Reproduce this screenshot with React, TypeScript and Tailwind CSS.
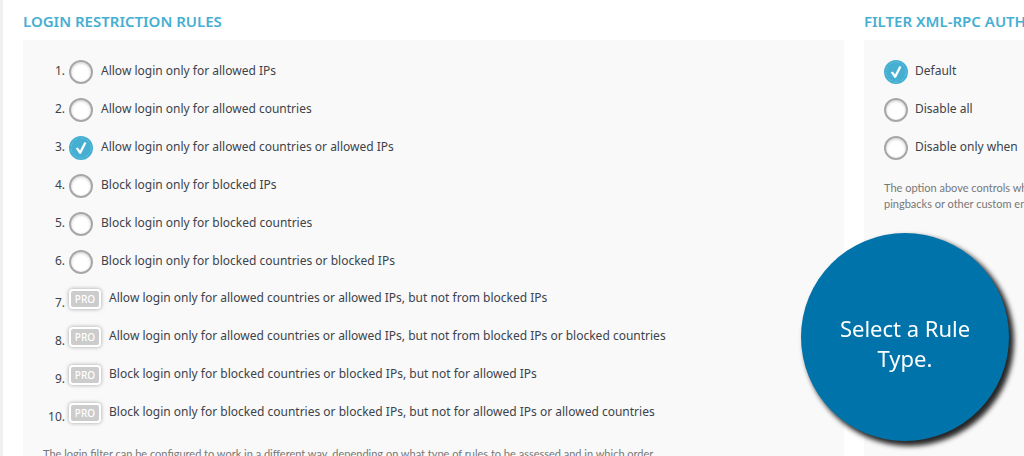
import { useState } from 'react';

interface RuleRadioProps {
  id: string;
  name: string;
  checked: boolean;
  onChange: () => void;
}

const rules = [
  { label: 'Allow login only for allowed IPs' },
  { label: 'Allow login only for allowed countries' },
  { label: 'Allow login only for allowed countries or allowed IPs' },
  { label: 'Block login only for blocked IPs' },
  { label: 'Block login only for blocked countries' },
  { label: 'Block login only for blocked countries or blocked IPs' },
  { label: 'Allow login only for allowed countries or allowed IPs, but not from blocked IPs', pro: true },
  { label: 'Allow login only for allowed countries or allowed IPs, but not from blocked IPs or blocked countries', pro: true },
  { label: 'Block login only for blocked countries or blocked IPs, but not for allowed IPs', pro: true },
  { label: 'Block login only for blocked countries or blocked IPs, but not for allowed IPs or allowed countries', pro: true },
];

const xmlRpcOptions = ['Default', 'Disable all', 'Disable only when'];

function RuleRadio({ id, name, checked, onChange }: RuleRadioProps) {
  return (
    <span className="relative block size-6 shrink-0">
      <input
        type="radio"
        id={id}
        name={name}
        checked={checked}
        onChange={onChange}
        className="block size-6 appearance-none rounded-full border-2 border-[#a7a7a7] bg-white shadow-[inset_0_1px_3px_rgba(0,0,0,0.2)] checked:border-[#45afd2] checked:bg-[#45afd2] checked:shadow-none"
      />
      {checked && (
        <svg viewBox="0 0 24 24" className="pointer-events-none absolute inset-0 size-6" fill="none">
          <circle cx="12" cy="12" r="10" stroke="#6cc0dc" strokeWidth="0.7" strokeDasharray="5 1.5" />
          <path d="M6.8 12.6 8.8 11.4 11 14.4 15.4 6 17.4 7 12 17.8 10.4 17.8Z" fill="white" />
        </svg>
      )}
    </span>
  );
}

export default function App() {
  const [rule, setRule] = useState(2);
  const [xmlRpc, setXmlRpc] = useState(0);

  return (
    <main className="h-screen overflow-hidden border-l-3 border-[#f0f0f0] bg-white pl-5 font-['Noto_Sans',sans-serif] text-[12px] text-[#3c434a]">
      <div className="grid min-h-full grid-cols-[minmax(0,1fr)_160px] gap-5">
        {/* Login rules */}
        <section className="flex flex-col">
          <h2 className="flex h-10 items-center pt-[2px] text-[15px] font-semibold text-[#45afd2]">LOGIN RESTRICTION RULES</h2>
          <div className="flex-1 bg-[#f9f9f9] p-5">
            <ol className="flex flex-col gap-[14px]">
              {rules.map(({ label, pro }, i) => (
                <li key={label} className="flex h-6 items-center gap-1">
                  {pro ? (
                    <>
                      <span className="w-[22px] pt-[6px] text-right leading-5">{i + 1}.</span>
                      <span className="mb-[2px] flex h-5 w-8 items-center justify-center rounded-sm border-2 border-white bg-[#cccccc] text-[10px] font-medium text-white shadow-[0_0_4px_rgba(0,0,0,0.35)]">
                        PRO
                      </span>
                      <span className="mb-1 ml-1 leading-5 whitespace-nowrap">{label}</span>
                    </>
                  ) : (
                    <>
                      <span className="mb-[2px] w-[22px] text-right leading-5">{i + 1}.</span>
                      <RuleRadio id={`rule-${i}`} name="rule" checked={rule === i} onChange={() => setRule(i)} />
                      <label htmlFor={`rule-${i}`} className="mb-[2px] ml-1 leading-5 whitespace-nowrap">
                        {label}
                      </label>
                    </>
                  )}
                </li>
              ))}
            </ol>
            <p className="mt-5 font-['Lato',sans-serif] text-[11px] leading-4 whitespace-nowrap text-[#777777]">
              The login filter can be configured to work in a different way, depending on what type of rules to be assessed and in which order.
            </p>
          </div>
        </section>

        {/* XML-RPC */}
        <section className="flex min-w-0 flex-col overflow-hidden whitespace-nowrap">
          <h2 className="flex h-10 items-center pt-[2px] text-[15px] font-semibold text-[#45afd2]">FILTER XML-RPC AUTHENTICATION</h2>
          <div className="flex-1 bg-[#f9f9f9] p-5">
            <div className="flex flex-col gap-[14px]">
              {xmlRpcOptions.map((label, i) => (
                <div key={label} className="flex h-6 items-center gap-[7px]">
                  <RuleRadio id={`xml-${i}`} name="xml" checked={xmlRpc === i} onChange={() => setXmlRpc(i)} />
                  <label htmlFor={`xml-${i}`} className="mb-[2px] leading-5">
                    {label}
                  </label>
                </div>
              ))}
            </div>
            <p className="mt-5 font-['Lato',sans-serif] text-[11px] leading-4 text-[#777777]">
              The option above controls what
              <br />
              pingbacks or other custom endpoints
            </p>
          </div>
        </section>
      </div>

      {/* Callout */}
      <aside className="fixed right-[15px] bottom-[15px] flex size-52 items-center justify-center rounded-full bg-[#0073aa] px-6 pt-3 text-center text-[22px] leading-[30px] text-white shadow-[4px_4px_5px_1px_rgba(0,0,0,0.85)]">
        <p>
          Select a Rule
          <br />
          Type.
        </p>
      </aside>
    </main>
  );
}
